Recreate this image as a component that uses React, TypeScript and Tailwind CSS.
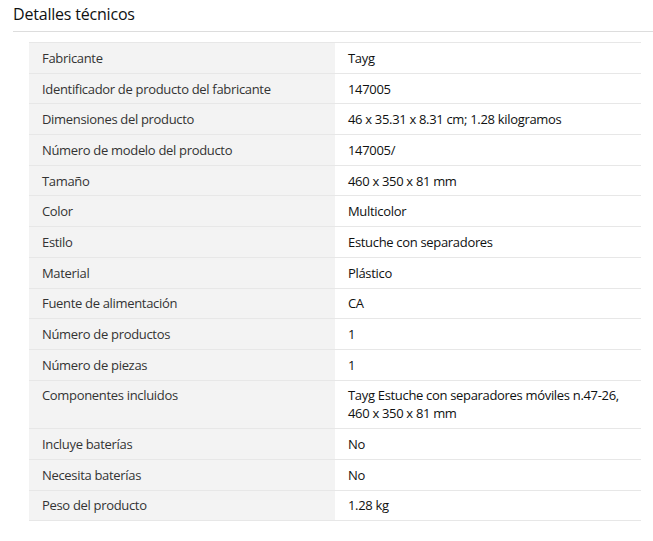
import React from "react";

const rows: [string, string][] = [
  ["Fabricante", "Tayg"],
  ["Identificador de producto del fabricante", "147005"],
  ["Dimensiones del producto", "46 x 35.31 x 8.31 cm; 1.28 kilogramos"],
  ["Número de modelo del producto", "147005/"],
  ["Tamaño", "460 x 350 x 81 mm"],
  ["Color", "Multicolor"],
  ["Estilo", "Estuche con separadores"],
  ["Material", "Plástico"],
  ["Fuente de alimentación", "CA"],
  ["Número de productos", "1"],
  ["Número de piezas", "1"],
  ["Componentes incluidos", "Tayg Estuche con separadores móviles n.47-26, 460 x 350 x 81 mm"],
  ["Incluye baterías", "No"],
  ["Necesita baterías", "No"],
  ["Peso del producto", "1.28 kg"],
];

export default function App() {
  return (
    <div
      className="w-[653px] h-[541px] bg-white text-[#0f1111] overflow-hidden"
      style={{ fontFamily: '"Open Sans", "Noto Sans", Arial, sans-serif' }}
    >
      <div className="pl-[13px] pt-[2px]">
        <h2 className="text-[16px] tracking-[-0.2px] leading-[24px] font-normal h-[29px]">Detalles técnicos</h2>
        <div className="border-t border-[#dddddd]" />
      </div>
      <div className="pl-[29px] pr-[12px] pt-[10px]">
        <table className="w-full border-collapse text-[13px] tracking-[-0.32px] leading-[18px]">
          <tbody>
            {rows.map(([k, v], i) => (
              <tr key={i} className="border-t border-b border-[#e7e7e7]">
                <th className="w-[306px] bg-[#f3f3f3] text-left font-normal text-[#333333] align-top px-[13px] py-[5.85px]">
                  {k}
                </th>
                <td className="text-left align-top px-[13px] py-[5.85px] text-[#0f1111]">
                  {v}
                </td>
              </tr>
            ))}
          </tbody>
        </table>
      </div>
    </div>
  );
}
